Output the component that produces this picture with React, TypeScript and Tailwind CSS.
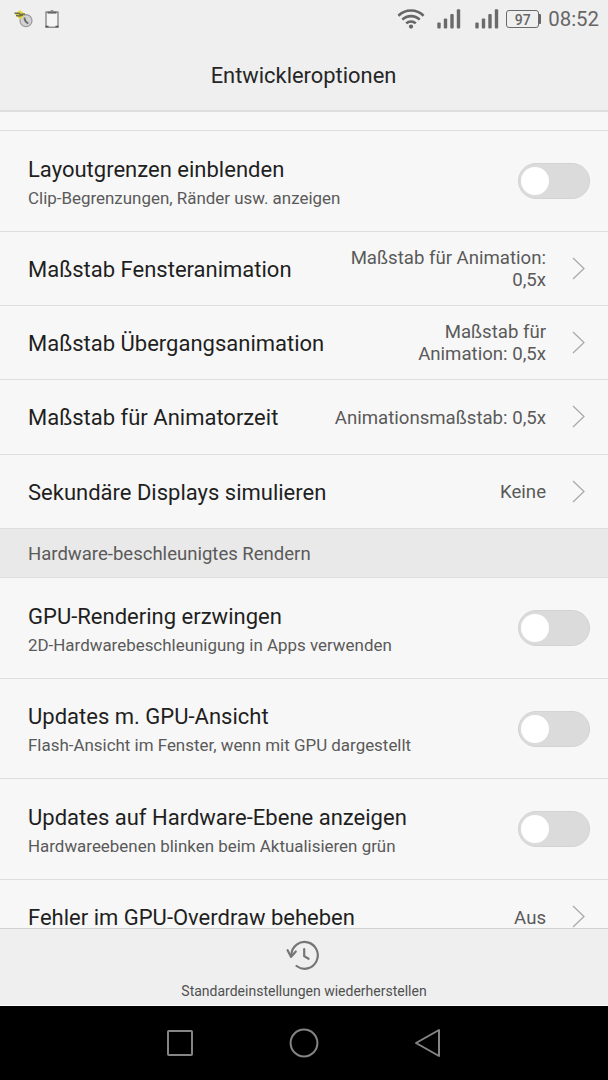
import type {ReactNode} from 'react';

// Entwickleroptionen: status bar, title, scrolled settings list,
// reset action and the system navigation bar.

function WifiIcon() {
  return (
    <svg width="28" height="22" viewBox="0 0 28 22" fill="none" stroke="#666" strokeWidth="2.6">
      <path d="M1.4 7.7a18 18 0 0 1 25.2 0" />
      <path d="M5.3 11.6a12.6 12.6 0 0 1 17.4 0" />
      <path d="M9.2 15.4a7 7 0 0 1 9.6 0" />
      <circle cx="14" cy="18.6" r="2.1" fill="#666" stroke="none" />
    </svg>
  );
}

function SignalIcon() {
  return (
    <svg width="24" height="20" viewBox="0 0 24 20" fill="#6a6a6a">
      <rect x="0.3" y="13.5" width="3.4" height="6" rx="1" />
      <rect x="6.8" y="9.5" width="3.4" height="10" rx="1" />
      <rect x="13.3" y="5" width="3.4" height="14.5" rx="1" />
      <rect x="19.8" y="0.3" width="3.4" height="19.2" rx="1" />
    </svg>
  );
}

function BatteryIcon() {
  return (
    <div className="flex items-center">
      <div className="flex h-[18px] w-[33px] items-center justify-center rounded-[3px] border-[1.5px] border-[#6a6a6a] pt-px text-[14px] leading-none font-medium text-[#666]">
        97
      </div>
      <div className="h-2.5 w-0.5 rounded-r-[1px] bg-[#666]" />
    </div>
  );
}

function DebugIcon() {
  return (
    <svg width="20" height="18" viewBox="0 0 20 18">
      <circle cx="12" cy="10.6" r="6" fill="#d2d2d2" stroke="#999" strokeWidth="1.2" />
      <path d="M10.5 7.5c0 2.5 1 4.5 3.8 6" fill="none" stroke="#666" strokeWidth="1.8" />
      <path d="M6 0l5.2 4.5L6 9.5 1.2 4.5z" fill="#e3d92d" />
      <path d="M0.5 3.2h4.5l1 1.2 5-.4M2 5.5l3.5.5 3.5-1" fill="none" stroke="#6b6b50" strokeWidth="1.4" />
    </svg>
  );
}

function ClipboardIcon() {
  return (
    <svg width="14" height="18" viewBox="0 0 14 18">
      <rect x="1" y="2" width="12" height="15.2" fill="#f5f5f5" stroke="#777" strokeWidth="1.2" />
      <path d="M2.5 2.6h9" stroke="#666" strokeWidth="2" />
      <path d="M5.5 1.5a1.5 1.2 0 0 1 3 0" fill="none" stroke="#888" />
      <path d="M0.5 16.5h3M10.5 16.5h3" stroke="#555" strokeWidth="1.5" />
    </svg>
  );
}

function StatusBar() {
  return (
    <div className="flex h-[38px] shrink-0 items-center justify-between pr-[9px] pl-[14px]">
      <div className="flex items-center gap-[11px]">
        <DebugIcon />
        <ClipboardIcon />
      </div>
      <div className="flex items-center">
        <WifiIcon />
        <span className="ml-3"><SignalIcon /></span>
        <span className="ml-[14px]"><SignalIcon /></span>
        <span className="ml-[7px]"><BatteryIcon /></span>
        <span className="ml-[7px] pt-px text-[20.4px] leading-none text-[#666]">08:52</span>
      </div>
    </div>
  );
}

function Toggle() {
  return (
    <span className="flex h-9 w-[72px] shrink-0 items-center rounded-full border border-[#d3d3d3] bg-[#dbdbdb] pl-0.5">
      <span className="size-[28px] rounded-full bg-white" />
    </span>
  );
}

function Chevron() {
  return (
    <svg width="14" height="24" viewBox="0 0 14 24" fill="none" stroke="#a8a8a8" strokeWidth="1.2">
      <path d="M1 1L12 11.5 1 22" />
    </svg>
  );
}

function SwitchRow({title, summary, className}: {title: string; summary: string; className: string}) {
  return (
    <div className={`flex shrink-0 items-center justify-between border-b border-[#dedede] pr-[18px] pl-7 ${className}`}>
      <div className="pt-[3px]">
        <p className="text-[22.03px] leading-[30px] text-[#1f1f1f]">{title}</p>
        <p className="mt-px text-[16.93px] leading-[25px] text-[#5a5a5a]">{summary}</p>
      </div>
      <Toggle />
    </div>
  );
}

function ValueRow({title, value, className}: {title: string; value: ReactNode; className: string}) {
  return (
    <div className={`flex shrink-0 items-center border-b border-[#dedede] pr-[22px] pl-7 ${className}`}>
      <p className="whitespace-nowrap pt-0.5 text-[22px] leading-[30px] text-[#1f1f1f]">{title}</p>
      <p className="mr-[26px] ml-auto whitespace-nowrap pt-[3px] text-right text-[18.62px] leading-[21.6px] text-[#5a5a5a]">{value}</p>
      <Chevron />
    </div>
  );
}

export default function App() {
  return (
    <div className="flex h-[1080px] w-[608px] flex-col overflow-hidden bg-[#f7f7f7] font-['Roboto',sans-serif]">
      <header className="flex h-[112px] shrink-0 flex-col border-b-2 border-[#dedede] bg-[#efefef]">
        <StatusBar />
        <h1 className="flex flex-1 items-center justify-center pt-1 pr-px text-[21.9px] text-[#262626]">Entwickleroptionen</h1>
      </header>

      <main className="flex min-h-0 flex-1 flex-col overflow-hidden">
        {/* tail of the row that is scrolled out above */}
        <div className="h-[19px] shrink-0 border-b border-[#dedede]" />
        <SwitchRow className="h-[101px]" title="Layoutgrenzen einblenden" summary="Clip-Begrenzungen, Ränder usw. anzeigen" />
        <ValueRow className="h-[74px]" title="Maßstab Fensteranimation" value={<>Maßstab für Animation:<br />0,5x</>} />
        <ValueRow className="h-[74px]" title="Maßstab Übergangsanimation" value={<>Maßstab für<br />Animation: 0,5x</>} />
        <ValueRow className="h-[75px]" title="Maßstab für Animatorzeit" value="Animationsmaßstab: 0,5x" />
        <ValueRow className="h-[74px]" title="Sekundäre Displays simulieren" value="Keine" />
        <h2 className="flex h-[49px] shrink-0 items-center border-b border-[#dedede] bg-[#e9e9e9] pt-[3px] pl-7 text-[18.55px] text-[#5a5a5a]">
          Hardware-beschleunigtes Rendern
        </h2>
        <SwitchRow className="h-[101px]" title="GPU-Rendering erzwingen" summary="2D-Hardwarebeschleunigung in Apps verwenden" />
        <SwitchRow className="h-[100px]" title="Updates m. GPU-Ansicht" summary="Flash-Ansicht im Fenster, wenn mit GPU dargestellt" />
        <SwitchRow className="h-[101px]" title="Updates auf Hardware-Ebene anzeigen" summary="Hardwareebenen blinken beim Aktualisieren grün" />
        <ValueRow className="h-[75px]" title="Fehler im GPU-Overdraw beheben" value="Aus" />
      </main>

      <footer className="flex h-[78px] shrink-0 flex-col items-center border-t border-b border-t-[#d2d2d2] border-b-white bg-[#efefef]">
        <svg className="mt-[11px] mr-[3px]" width="34" height="31" viewBox="0 0 34 31" fill="none" stroke="#757575" strokeWidth="2.2">
          <path d="M5.4 14.8A13.2 13.4 0 1 1 10.6 26" strokeLinecap="round" />
          <path d="M1.6 10.2l3.5 6.7L9.8 11.5" strokeLinecap="round" strokeLinejoin="round" />
          <path d="M18.2 9v7.2l4.4 2.6" strokeLinecap="round" />
        </svg>
        <p className="mt-[10px] text-[14px] leading-[20px] text-[#505050]">Standardeinstellungen wiederherstellen</p>
      </footer>

      <nav className="flex h-[74px] shrink-0 items-center justify-center gap-[94px] bg-black">
        <svg width="30" height="30" viewBox="0 0 30 30" fill="none" stroke="#858585" strokeWidth="2">
          <rect x="3" y="3" width="24" height="24" rx="0.8" />
        </svg>
        <svg width="30" height="30" viewBox="0 0 30 30" fill="none" stroke="#858585" strokeWidth="2">
          <circle cx="15" cy="15" r="13.4" />
        </svg>
        <svg width="30" height="30" viewBox="0 0 30 30" fill="none" stroke="#858585" strokeWidth="2" strokeLinejoin="round">
          <path d="M26 2v26L3 15z" />
        </svg>
      </nav>
    </div>
  );
}
